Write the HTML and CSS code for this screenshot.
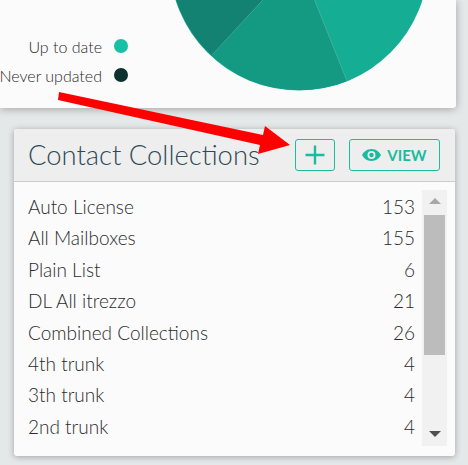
FILE: index.html
```html
<!DOCTYPE html>
<html lang="en">
<head>
    <meta charset="UTF-8">
    <meta name="viewport" content="width=device-width, initial-scale=1.0">
    <title>Contact Collections</title>
    <link rel="stylesheet" href="styles.css">
</head>
<body>
    <section class="chart-panel">
        <ul class="legend">
            <li class="legend-item">Up to date <span class="dot dot-current"></span></li>
            <li class="legend-item">Never updated <span class="dot dot-never"></span></li>
        </ul>
        <svg class="pie" width="328" height="108" viewBox="128 0 328 108">
            <circle cx="299" cy="-39" r="129.5" fill="#16ad95"/>
            <path d="M299 -39 L347 81 A129.5 129.5 0 0 1 212 56 Z" fill="#149983"/>
            <path d="M299 -39 L212 56 A129.5 129.5 0 0 1 170 -39 Z" fill="#148272"/>
            <path d="M299 -39 L212 55 M299 -39 L347 81" stroke="#5dbcab" stroke-width="0.6" fill="none"/>
        </svg>
    </section>

    <section class="collections">
        <header class="collections-head">
            <h2 class="collections-title">Contact Collections</h2>
            <button type="button" class="btn btn-add">
                <svg width="20" height="20" viewBox="0 0 20 20"><path d="M10 0.500 V19.500 M0.500 10 H19.500" stroke="#1abc9f" stroke-width="2.400"/></svg>
            </button>
            <button type="button" class="btn btn-view">
                <svg width="19" height="12" viewBox="0 0 19 12"><path fill-rule="evenodd" d="M9.500 0 C14 0 17.500 3 19 6 C17.500 9 14 12 9.500 12 C5 12 1.500 9 0 6 C1.500 3 5 0 9.500 0 Z M9.500 2 A4 4 0 1 0 9.500 10 A4 4 0 1 0 9.500 2 Z M9.500 3.800 A2.200 2.200 0 1 1 9.500 8.200 A2.200 2.200 0 1 1 9.500 3.800 Z" fill="#1abc9f"/></svg>
                VIEW
            </button>
        </header>
        <div class="collections-body">
            <ul class="rows">
                <li class="row"><span>Auto License</span><span>153</span></li>
                <li class="row"><span>All Mailboxes</span><span>155</span></li>
                <li class="row"><span>Plain List</span><span>6</span></li>
                <li class="row"><span>DL All itrezzo</span><span>21</span></li>
                <li class="row"><span>Combined Collections</span><span>26</span></li>
                <li class="row"><span>4th trunk</span><span>4</span></li>
                <li class="row"><span>3th trunk</span><span>4</span></li>
                <li class="row"><span>2nd trunk</span><span>4</span></li>
            </ul>
            <div class="scrollbar">
                <span class="scroll-up"></span>
                <span class="scroll-thumb"></span>
                <span class="scroll-down"></span>
            </div>
        </div>
    </section>

    <svg class="arrow" width="468" height="465" viewBox="0 0 468 465">
        <polygon points="59,92 58,100 260,145 258,154 290,145 265,126 263,135" fill="#ff0000"/>
    </svg>
</body>
</html>
```

FILE: styles.css
```css
* {
    box-sizing: border-box;
}

body {
    background-color: #e5e8e8;
    font-family: Lato, "Open Sans", sans-serif;
    font-weight: 300;
    margin: 0;
    height: 465px;
    overflow: hidden;
    position: relative;
}

.chart-panel {
    background-color: #fbfbfb;
    border-radius: 0 0 3px 0;
    box-shadow: 0 1px 8px rgba(0, 0, 0, 0.3);
    display: flex;
    height: 108px;
    width: 456px;
    overflow: hidden;
}

.legend {
    list-style: none;
    margin: 0;
    padding: 32px 0 0;
    width: 128px;
    flex: none;
}

.legend-item {
    align-items: center;
    color: #2b2b2b;
    display: flex;
    font-size: 16px;
    gap: 12px;
    height: 29px;
    justify-content: flex-end;
    white-space: nowrap;
}

.dot {
    border-radius: 50%;
    display: block;
    height: 14px;
    margin-top: -1px;
    width: 14px;
    flex: none;
}

.dot-current {
    background-color: #17c0a4;
}

.dot-never {
    background-color: #0c3230;
}

.pie {
    display: block;
    flex: none;
}

.collections {
    background-color: #fbfbfb;
    border-radius: 3px;
    box-shadow: 0 1px 6px rgba(0, 0, 0, 0.3);
    height: 327px;
    margin: 21px 0 0 14px;
    width: 441px;
}

.collections-head {
    align-items: center;
    background-color: #eeeeee;
    border-bottom: 1px solid #cccccc;
    border-radius: 3px 3px 0 0;
    display: flex;
    height: 53px;
    padding: 0 15px 0 14px;
}

.collections-title {
    color: #2f4a56;
    flex: 1;
    font-size: 27.4px;
    font-weight: 300;
    margin: 0 0 2px;
    white-space: nowrap;
}

.btn {
    align-items: center;
    background: transparent;
    border: 1px solid #1abc9f;
    border-radius: 3px;
    color: #1abc9f;
    display: flex;
    font-family: inherit;
    height: 32px;
    justify-content: center;
    padding: 0;
}

.btn-add {
    margin-right: 14px;
    width: 40px;
}

.btn-view {
    font-size: 15px;
    font-weight: 700;
    gap: 6px;
    width: 91px;
}

.collections-body {
    display: flex;
    padding: 8px 8px 0 14px;
}

.rows {
    flex: 1;
    list-style: none;
    margin: 0;
    padding: 1px 7px 0 0;
}

.row {
    color: #2b2b2b;
    display: flex;
    font-size: 19px;
    height: 31.4px;
    justify-content: space-between;
    line-height: 31.4px;
}

.scrollbar {
    align-items: center;
    background-color: #f1f1f1;
    display: flex;
    flex: none;
    flex-direction: column;
    height: 256px;
    width: 25px;
}

.scroll-up {
    border-bottom: 6px solid #a8a8a8;
    border-left: 6px solid transparent;
    border-right: 6px solid transparent;
    margin: 8px 0 11px;
}

.scroll-thumb {
    background-color: #bcbcbc;
    height: 140px;
    width: 21px;
}

.scroll-down {
    border-left: 6px solid transparent;
    border-right: 6px solid transparent;
    border-top: 6px solid #505050;
    margin-top: auto;
    margin-bottom: 9px;
}

.arrow {
    left: 0;
    pointer-events: none;
    position: absolute;
    top: 0;
}
```
